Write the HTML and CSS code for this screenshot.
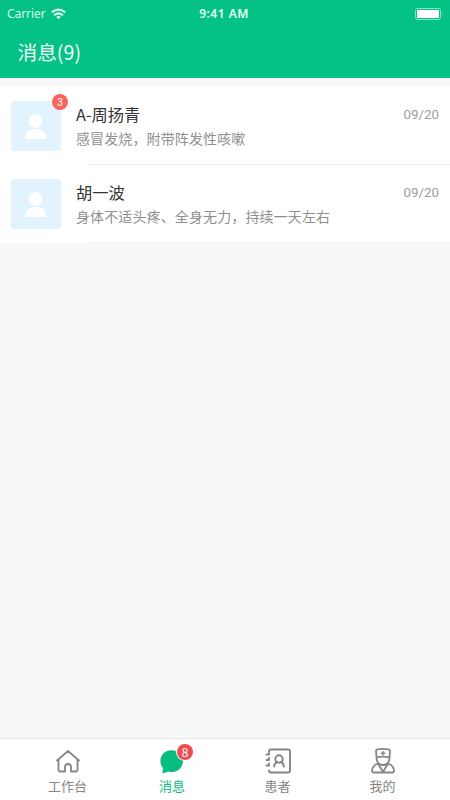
FILE: index.html
```html
<!DOCTYPE html>
<html lang="zh-CN">
<head>
<meta charset="utf-8">
<meta name="viewport" content="width=device-width, initial-scale=1">
<title>消息</title>
<link rel="stylesheet" href="styles.css">
</head>
<body>
<div class="app">
  <header class="header">
    <div class="status">
      <div class="carrier">
        <span>Carrier</span>
        <svg class="wifi" viewBox="0 0 16 12" fill="none" stroke="currentColor" stroke-width="2.200"><path d="M.8 4.300Q8-1.500 15.200 4.300M3.300 7.300Q8 3.400 12.700 7.300"/><path d="M5.500 9Q8 7 10.500 9L8 11.600Z" fill="currentColor" stroke="none"/></svg>
      </div>
      <span class="time">9:41 AM</span>
      <svg class="battery" viewBox="0 0 29 12"><rect x=".5" y=".5" width="25" height="11" rx="2" fill="none" stroke="#8fe3c4"/><rect x="2" y="2" width="22" height="8" rx=".5" fill="#fff"/><path d="M27 4.500q1.600 1.500 0 3z" fill="#8fe3c4"/></svg>
    </div>
    <h1 class="title">消息(9)</h1>
  </header>
  <main class="list">
    <article class="row">
      <div class="avatar">
        <svg viewBox="0 0 50 50" fill="#fff"><circle cx="24.500" cy="20" r="7"/><path d="M14 38c0-6.500 3.500-10 10.700-10s10.700 3.500 10.700 10z"/></svg>
        <span class="badge">3</span>
      </div>
      <div class="content">
        <div class="line"><h2 class="name">A-周扬青</h2><time class="date">09/20</time></div>
        <p class="text">感冒发烧，附带阵发性咳嗽</p>
      </div>
    </article>
    <article class="row">
      <div class="avatar">
        <svg viewBox="0 0 50 50" fill="#fff"><circle cx="24.500" cy="20" r="7"/><path d="M14 38c0-6.500 3.500-10 10.700-10s10.700 3.500 10.700 10z"/></svg>
      </div>
      <div class="content">
        <div class="line"><h2 class="name">胡一波</h2><time class="date">09/20</time></div>
        <p class="text">身体不适头疼、全身无力，持续一天左右</p>
      </div>
    </article>
  </main>
  <nav class="tabs">
    <a class="tab">
      <svg class="icon" viewBox="0 0 28 28" fill="none" stroke="currentColor" stroke-width="1.800" stroke-linejoin="round" stroke-linecap="round"><path d="M3 13.500 14 4l11 9.500M4.500 12.500V23q0 1.500 1.500 1.500h5v-4.500a3 3 0 0 1 6 0v4.500h5q1.500 0 1.500-1.500V12.500"/></svg>
      <span>工作台</span>
    </a>
    <a class="tab active">
      <svg class="icon" viewBox="0 0 28 28" fill="currentColor"><path d="M13.500 3.200C19.700 3.200 25 7.700 25 14c0 6.500-5.200 11-11 11q-2 0-3.500-.6L5.300 26.300q-1 .3-.8-.8l.4-4.500C3.200 19 2.400 16.500 2.400 14c0-6.300 5-10.800 11.100-10.800z"/></svg>
      <span class="count">8</span>
      <span>消息</span>
    </a>
    <a class="tab">
      <svg class="icon" viewBox="0 0 28 28" fill="none" stroke="currentColor" stroke-width="1.900" stroke-linecap="round" stroke-linejoin="round"><path d="M5 5V4.500Q5 2.500 7 2.500h17q2 0 2 2v19q0 2-2 2H7q-2 0-2-2V23.500M2.500 7.500H5V6M2.500 13H5V11M2.500 18.500H5V16.500"/><circle cx="15" cy="12" r="3.700"/><path d="M10.200 19.500c0-2.500 1.500-4 3-4.400M19.800 19.500c0-2.500-1.500-4-3-4.400"/></svg>
      <span>患者</span>
    </a>
    <a class="tab">
      <svg class="icon" viewBox="0 0 28 28" fill="none" stroke="currentColor" stroke-width="1.800" stroke-linecap="round" stroke-linejoin="round"><path d="M7.500 10.500 7 4q0-1.500 1.500-1.700 5.500-.7 11 0Q21 2.500 21 4l-.5 6.500q-6.500-1.800-13 0zM7.500 10.500c0 5 2.500 7.500 6.500 7.500s6.500-2.500 6.500-7.500M9.200 16.500C5.500 17.700 3 20 3 24q0 1.500 1.500 1.500h19q1.500 0 1.500-1.500c0-4-2.500-6.300-6.200-7.500M9.200 17l4.800 8 4.800-8"/><path d="M14 4.500v3.600M12.200 6.300h3.600" stroke-width="1.400"/></svg>
      <span>我的</span>
    </a>
  </nav>
</div>
</body>
</html>
```

FILE: styles.css
```css
* { box-sizing: border-box; }
body { margin: 0; font-family: "Noto Sans CJK SC", sans-serif; }
h1, h2, p { margin: 0; font-weight: 400; }
.app { height: 800px; display: flex; flex-direction: column; background: #f6f8fa; }
.header { height: 78px; flex: none; background: #04c185; color: #fff; }
.status { height: 27px; padding: 0 6px 0 7px; display: grid; grid-template-columns: 1fr auto 1fr; align-items: center; font-family: "Noto Sans", sans-serif; font-size: 12px; }
.carrier { display: flex; align-items: center; gap: 5px; color: #d9fdef; letter-spacing: -.05px; }
.wifi { width: 15px; height: 12px; }
.time { font-weight: 600; color: #e4fff5; letter-spacing: .5px; position: relative; left: -1.500px; }
.battery { width: 29px; height: 12px; justify-self: end; }
.title { padding: 10px 17.500px 0; font-size: 19.700px; line-height: 30px; color: #effff9; }
.list { flex: 1; padding-top: 9px; }
.row { display: flex; height: 78px; background: #fff; padding-left: 11px; gap: 15px; }
.avatar { position: relative; width: 50px; height: 50px; margin-top: 14px; flex: none; background: #e1f3ff; border-radius: 3px; }
.avatar svg { display: block; width: 50px; height: 50px; }
.badge { position: absolute; top: -7px; right: -7px; width: 16px; height: 16px; border-radius: 50%; background: #f8655f; color: #fff; font-family: Roboto, sans-serif; font-size: 10px; line-height: 17px; text-align: center; }
.content { position: relative; flex: 1; padding: 15px 11px 0 0; }
.content::after { content: ""; position: absolute; left: 12px; right: 0; bottom: 0; height: 1px; background: #f1f3f5; }
.line { display: flex; justify-content: space-between; align-items: center; height: 24px; }
.name { font-size: 16.300px; line-height: 24px; color: #333; }
.date { font-family: Roboto, sans-serif; font-size: 13.300px; color: #9c9c9c; }
.text { font-size: 14px; line-height: 25px; letter-spacing: .12px; color: #8f8f8f; }
.tabs { height: 62px; flex: none; padding: 0 15px; display: grid; grid-template-columns: repeat(4, 1fr); background: #fff; border-top: 1px solid #e9ebed; }
.tab { position: relative; display: flex; flex-direction: column; align-items: center; padding-top: 8px; font-size: 13px; line-height: 22px; color: #858585; }
.icon { width: 28px; height: 28px; }
.active { left: -.5px; color: #08bb80; }
.count { position: absolute; top: 5px; left: calc(50% + 5px); width: 16px; height: 16px; border-radius: 50%; background: #ea4f50; color: #fff; font-size: 12px; line-height: 16px; text-align: center; box-shadow: 0 0 0 1px #fff; }
```
